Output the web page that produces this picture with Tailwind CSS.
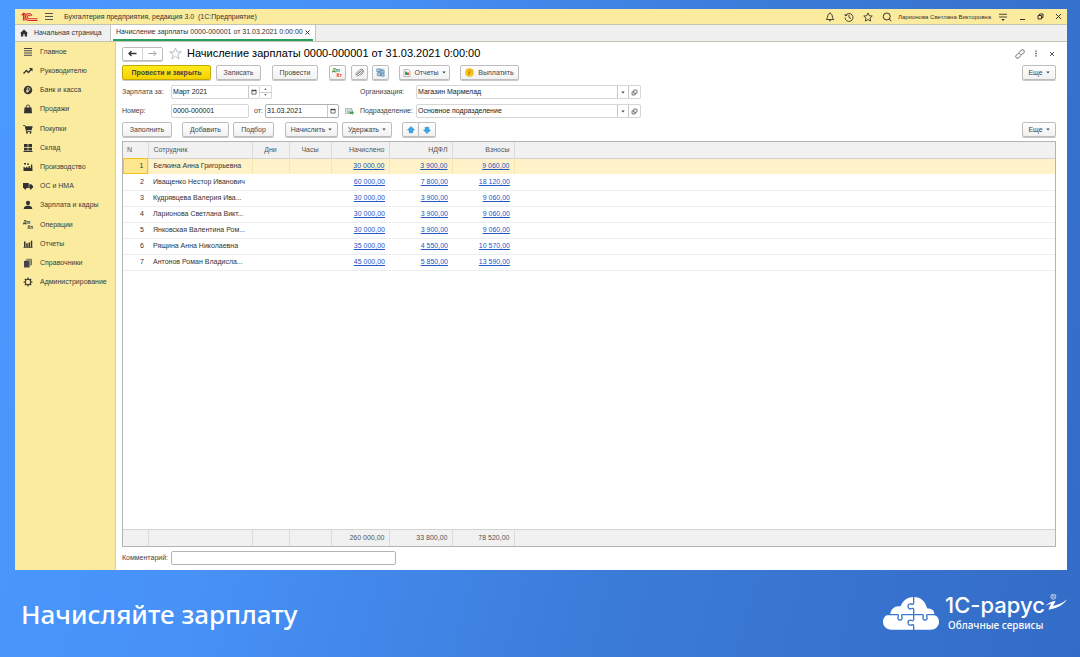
<!DOCTYPE html>
<html lang="ru">
<head>
<meta charset="utf-8">
<meta name="viewport" content="width=device-width, initial-scale=1">
<title>Начисление зарплаты</title>
<script src="https://cdn.jsdelivr.net/npm/@tailwindcss/browser@4"></script>
</head>
<body class="flex min-h-screen flex-col bg-linear-[105deg,#4b9aff_0%,#4791f7_28%,#3b7bd8_62%,#336cc6_100%] pt-[9px] font-['Liberation_Sans',Arial,sans-serif] text-[7px] leading-[10px] text-[#444]">
<svg class="hidden" aria-hidden="true">
  <symbol id="cal" viewBox="0 0 10 10"><path d="M1.5 2.5h7v6h-7z" fill="none" stroke="#444" stroke-width="1.2"/><path d="M1 1.6h8v2.2H1zM2.5.6h1v1h-1zM6.5.6h1v1h-1z" fill="#444"/></symbol>
  <symbol id="open" viewBox="0 0 10 10"><path d="M4 1.5h4.5V6H4zM6 6v2.5H1.5V4H4" fill="none" stroke="#555" stroke-width="1.1" stroke-linejoin="round"/></symbol>
  <symbol id="caret" viewBox="0 0 6 4"><path d="M.5.5h5L3 3.5z" fill="#444"/></symbol>
</svg>

<main class="mr-[13px] ml-[15px] flex flex-1 flex-col bg-white">
  <header class="flex h-[15px] items-center bg-[#fbeb9e] pr-1 pl-[6px]">
    <svg class="h-[10px] w-[17px]" viewBox="0 0 34 20" fill="none" stroke="#d8262c" stroke-width="2.2"><path d="M1 6.5 5 3v14M5 3.2h3V17"/><path d="M22 7.5C21 4.500 18.500 3 16 3c-4 0-6.500 3-6.500 7s3 7 6.500 7h17M18.800 8.500C18 7 17 6.500 16 6.500c-2 0-3 1.500-3 3.500s1.200 3.500 3 3.500h17"/></svg>
    <button aria-label="Меню" class="ml-[6px]"><svg class="h-[9px] w-[10px]" viewBox="0 0 10 9" stroke="#555"><path d="M1 1.500h8M1 4.500h8M1 7.500h8"/></svg></button>
    <h1 class="ml-[10px] flex-1 whitespace-nowrap text-[#333]">Бухгалтерия предприятия, редакция 3.0&nbsp; (1С:Предприятие)</h1>
    <div class="flex items-center gap-[9px]">
      <button aria-label="Уведомления"><svg class="size-[10px]" viewBox="0 0 20 20" fill="none" stroke="#333" stroke-width="1.800"><path d="M2.500 15h15c-2-2-2.500-4-3-7C14 4.500 12.500 3 10 3S6 4.500 5.500 8c-.5 3-1 5-3 7zM8 17.500h4M10 1v2"/></svg></button>
      <button aria-label="История"><svg class="size-[10px]" viewBox="0 0 20 20" fill="none" stroke="#333" stroke-width="1.800"><path d="M3 7a8 8 0 1 1-1 4M1.500 4 3 7.500 6.500 6.500M10 5.500V11l4 2"/></svg></button>
      <button aria-label="Избранное"><svg class="size-[10px]" viewBox="0 0 20 20" fill="none" stroke="#333" stroke-width="1.700"><path d="m10 1.800 2.500 5.600 6 .6-4.500 4.100 1.300 6L10 15l-5.300 3.100 1.300-6L1.500 8l6-.6z"/></svg></button>
      <button aria-label="Поиск"><svg class="size-[10px]" viewBox="0 0 20 20" fill="none" stroke="#333" stroke-width="2"><circle cx="9.500" cy="9" r="7"/><path d="m14.500 14 4 4.500"/></svg></button>
    </div>
    <span class="ml-[6px] whitespace-nowrap text-[6px] text-[#333]">Ларионова Светлана Викторовна</span>
    <button aria-label="Настройки" class="ml-[7px]"><svg class="size-[10px]" viewBox="0 0 20 20"><path d="M2 4.500h16M2 10h16" stroke="#333" stroke-width="1.800"/><path d="M6.500 14h7L10 18z" fill="#333"/></svg></button>
    <div class="ml-[10px] flex items-center gap-[9px]">
      <button aria-label="Свернуть"><svg class="size-[9px]" viewBox="0 0 9 9" stroke="#333"><path d="M2 7.500h5"/></svg></button>
      <button aria-label="Восстановить"><svg class="size-[9px]" viewBox="0 0 9 9" fill="none" stroke="#333"><path d="M2 3.500h3.500V7H2zM3.500 3.500V2H7v3.500H5.500"/></svg></button>
      <button aria-label="Закрыть окно"><svg class="size-[9px]" viewBox="0 0 9 9" stroke="#333"><path d="m2 2 5 5M7 2 2 7"/></svg></button>
    </div>
  </header>

  <nav aria-label="Вкладки" class="flex h-[18px] border-t border-b border-[#c4c4b4] bg-[#f0f0f0] text-[#333]">
    <a href="#" class="flex w-[96px] items-center border-r border-[#c4c4c4] pl-[5px] whitespace-nowrap">
      <svg class="size-[8px]" viewBox="0 0 16 16" fill="#333"><path d="M8 1 0 8.500h2V15h4.500v-4.500h3V15H14V8.500h2z"/></svg>
      <span class="ml-[6px]">Начальная страница</span>
    </a>
    <div class="flex w-[205px] flex-col border-r border-[#c4c4c4] bg-white px-[2px]">
      <div class="flex flex-1 items-center justify-between border-b-2 border-[#2ba05c] px-[3px] whitespace-nowrap">
        <a href="#">Начисление зарплаты 0000-000001 от 31.03.2021 0:00:00</a>
        <button aria-label="Закрыть вкладку"><svg class="size-[5px]" viewBox="0 0 5 5" stroke="#333"><path d="m.5.5 4 4M4.500.5l-4 4"/></svg></button>
      </div>
    </div>
  </nav>

  <div class="flex flex-1">
    <aside class="w-[101px] shrink-0 border-r border-[#e0d28c] bg-[#fbeb9e] text-[#3a3a3a]">
      <nav aria-label="Разделы" class="grid h-[250px] auto-rows-fr whitespace-nowrap [&_a]:flex [&_a]:items-center [&_a]:gap-[7px] [&_a]:pl-2 [&_svg]:size-[10px]">
        <a href="#"><svg viewBox="0 0 20 20" stroke="#444" stroke-width="2"><path d="M2 3h16M2 7.500h16M2 12h16M2 16.500h16"/></svg>Главное</a>
        <a href="#"><svg viewBox="0 0 20 20" fill="none" stroke="#333" stroke-width="2.600"><path d="m1 15 6-6 4 4 6-7"/><path d="M12 4h7v7z" fill="#333" stroke="none"/></svg>Руководителю</a>
        <a href="#"><svg viewBox="0 0 20 20"><circle cx="10" cy="10" r="8.500" fill="#333"/><path d="M8.500 15.500V5.500h2.700a2.600 2.600 0 0 1 0 5.300H6.500M6.500 13h5" fill="none" stroke="#fbeb9e" stroke-width="1.600"/></svg>Банк и касса</a>
        <a href="#"><svg viewBox="0 0 20 20"><path d="M3 7h14l1 11.500H2z" fill="#333"/><path d="M6.500 9V5.500a3.500 3.500 0 0 1 7 0V9" fill="none" stroke="#333" stroke-width="1.800"/></svg>Продажи</a>
        <a href="#"><svg viewBox="0 0 20 20" fill="#333"><path d="M0 2h4l1 2.500h14.500L17 12.500H7.500l.3 1.500H17v1.600H6.300L3.300 3.600H0z"/><circle cx="8" cy="17.500" r="1.800"/><circle cx="15" cy="17.500" r="1.800"/></svg>Покупки</a>
        <a href="#"><svg viewBox="0 0 20 20" fill="#333"><path d="M2 2h7.300v6H2zM10.700 2H18v6h-7.300zM2 9.300h7.300v5.500H2zM10.700 9.300H18v5.500h-7.300zM1 16h18v2H1z"/></svg>Склад</a>
        <a href="#"><svg viewBox="0 0 20 20" fill="#333"><path d="M1 9.500 6 12V9.500l5 2.500V8h2.500l.5 4h1.500L16 5h2.500l.5 13H1z"/><path d="M2 2h4v3H2zM8 3h4v2.500H8z"/></svg>Производство</a>
        <a href="#"><svg viewBox="0 0 20 20" fill="#333"><path d="M0 4h11.500v10H0zM12.500 6.500h4L20 10v4h-7.500z"/><circle cx="4.500" cy="15" r="2.200"/><circle cx="15.500" cy="15" r="2.200"/></svg>ОС и НМА</a>
        <a href="#"><svg viewBox="0 0 20 20" fill="#333"><path d="M10 1.500c2.700 0 4 1.800 4 4.200 0 2.600-1.400 4.900-4 4.900S6 8.300 6 5.700c0-2.400 1.300-4.200 4-4.200zM1.500 18c0-4 2-5.500 6-6.500h5c4 1 6 2.500 6 6.500z"/></svg>Зарплата и кадры</a>
        <a href="#"><svg viewBox="0 0 20 20" fill="#333" font-family="Liberation Sans" font-size="9" font-weight="bold" font-style="italic"><text x="0" y="8">Дт</text><text x="9" y="17">Кт</text></svg>Операции</a>
        <a href="#"><svg viewBox="0 0 20 20" fill="#333"><path d="M2 5h3v11H2zM6.500 8.500h3V16h-3zM11 7h3v9h-3zM15.500 3.500h3V16h-3zM1 16.500h18V18H1z"/></svg>Отчеты</a>
        <a href="#"><svg viewBox="0 0 20 20" fill="#444"><path d="M2 6h11v13H2z"/><path d="M4.500 4.500h10V16M7 2.500h10V14" fill="none" stroke="#444" stroke-width="1.400"/></svg>Справочники</a>
        <a href="#"><svg viewBox="0 0 20 20" fill="none" stroke="#333"><circle cx="10" cy="10" r="5.500" stroke-width="2.200"/><path d="M10 1v3M10 16v3M1 10h3M16 10h3M3.600 3.600l2.200 2.200M14.200 14.200l2.200 2.200M3.600 16.400l2.200-2.200M14.200 5.800l2.200-2.200" stroke-width="2.400"/></svg>Администрирование</a>
      </nav>
    </aside>

    <section class="flex min-w-0 flex-1 flex-col pt-[4px] pr-[11px] pb-[5px] pl-[6px]">
      <div class="flex h-[15px] items-center">
        <div class="flex h-[14px] w-[41px] rounded-[2px] border border-[#bbb] shadow-[0_1px_0_#ccc]">
          <button aria-label="Назад" class="flex flex-1 items-center justify-center border-r border-[#d4d4d4]"><svg class="h-[7px] w-[9px]" viewBox="0 0 18 14" fill="none" stroke="#333" stroke-width="2.600"><path d="M17 7H2M7 2 2 7l5 5"/></svg></button>
          <button aria-label="Вперёд" class="flex flex-1 items-center justify-center"><svg class="h-[7px] w-[9px]" viewBox="0 0 18 14" fill="none" stroke="#999" stroke-width="1.800"><path d="M1 7h15M11 2l5 5-5 5"/></svg></button>
        </div>
        <button aria-label="В избранное" class="ml-[6px]"><svg class="size-[13px]" viewBox="0 0 20 20" fill="none" stroke="#a5adb5" stroke-width="1.200"><path d="m10 1.500 2.400 6h6.600l-5.300 4 2 6.800L10 14.200l-5.700 4.100 2-6.800L1 7.500h6.600z"/></svg></button>
        <h2 class="ml-[5px] flex-1 whitespace-nowrap text-[11px] leading-[15px] text-black">Начисление зарплаты 0000-000001 от 31.03.2021 0:00:00</h2>
        <div class="flex items-center gap-[9px]">
          <button aria-label="Ссылка"><svg class="size-[10px]" viewBox="0 0 20 20" fill="none" stroke="#555" stroke-width="1.800"><path d="m9 6 3.500-3.500a3.200 3.200 0 0 1 5 5L14 11a3 3 0 0 1-4.500 0M11 14l-3.500 3.500a3.200 3.200 0 0 1-5-5L6 9a3 3 0 0 1 4.500 0"/></svg></button>
          <button aria-label="Действия" class="mr-[2px]"><svg class="h-[7px] w-[4px]" viewBox="0 0 8 16" fill="#444"><path d="M2.500 1h3v3h-3zM2.500 6.500h3v3h-3zM2.500 12h3v3h-3z"/></svg></button>
          <button aria-label="Закрыть" class="mr-[1px]"><svg class="size-[6px]" viewBox="0 0 6 6" stroke="#555"><path d="m1 1 4 4M5 1 1 5"/></svg></button>
        </div>
      </div>

      <div class="mt-[4px] flex h-[15px] whitespace-nowrap [&_button]:flex [&_button]:items-center [&_button]:justify-center [&_button]:rounded-[2px] [&_button]:border [&_button]:border-[#bdbdbd] [&_button]:bg-linear-to-b [&_button]:from-white [&_button]:to-[#f1f1f1] [&_button]:shadow-[0_1px_0_#c8c8c8]">
        <button class="w-[89px] border-[#c3a900]! from-[#ffea1a]! to-[#f5d200]! font-bold text-[#444]">Провести и закрыть</button>
        <button class="ml-[5px] w-[45px]">Записать</button>
        <button class="ml-[11px] w-[46px]">Провести</button>
        <button aria-label="Дт/Кт" class="ml-[11px] w-[17px]"><svg class="size-[11px]" viewBox="0 0 22 22" font-family="Liberation Sans" font-size="10" font-weight="bold"><text x="0" y="10" fill="#2c9a55" font-style="italic">Дт</text><text x="9" y="19" fill="#e03c31">Кт</text></svg></button>
        <button aria-label="Вложения" class="ml-[5px] w-[17px]"><svg class="size-[9px]" viewBox="0 0 20 20" fill="none" stroke="#666" stroke-width="1.700"><path d="M6 13.500 13.500 6a1.800 1.800 0 0 1 2.600 2.600L8 16.600a3.600 3.600 0 0 1-5-5L11 3.500a5 5 0 0 1 7 7L12 16.500M4.500 15l8-8"/></svg></button>
        <button aria-label="Структура" class="ml-[4px] w-[17px]"><svg class="size-[9px]" viewBox="0 0 20 20"><path d="M1 1h18v18H1z" fill="#c5dcec"/><path d="M2 2h7v6H2zM11 6h7v5h-7zM4 11h6v6H4zM12 13h6v5h-6zM9 4h5v2M7 8v3M10 15h2" fill="none" stroke="#336e9f" stroke-width="1.300"/></svg></button>
        <button class="ml-[10px] w-[51px] gap-[3px]"><svg class="size-[8px]" viewBox="0 0 16 16"><path d="M2 1h9l3 3v11H2z" fill="#fff" stroke="#777"/><path d="M4 5h4v7H4z" fill="#2fa65a"/><path d="M8 7h4v5H8z" fill="#df4238"/></svg>Отчеты<svg class="h-[3px] w-[4px]"><use href="#caret"/></svg></button>
        <button class="ml-[10px] w-[59px] gap-[4px]"><svg class="size-[9px]" viewBox="0 0 18 18"><circle cx="9" cy="9" r="8" fill="#fbc91f" stroke="#e0a400"/><path d="M7.500 14V5h2.300a2.200 2.200 0 0 1 0 4.500H6M6 11.500h4" fill="none" stroke="#b77c00" stroke-width="1.300"/></svg>Выплатить</button>
        <button class="ml-auto w-[34px] gap-[3px]">Еще<svg class="h-[3px] w-[4px]"><use href="#caret"/></svg></button>
      </div>

      <form class="mt-[5px] flex flex-col gap-[5px] whitespace-nowrap [&_input]:min-w-0 [&_input]:px-[1px] [&_input]:text-[#222] [&_input]:outline-none [&_select]:text-[#222]">
        <div class="flex h-[14px] items-center">
          <div class="flex w-[238px] items-center">
            <label for="period" class="w-[49px]">Зарплата за:</label>
            <div class="flex h-[14px] w-[89px] rounded-[2px] border border-[#d6d6d6]">
              <input id="period" value="Март 2021" class="flex-1">
              <button type="button" aria-label="Календарь периода" class="flex w-[11px] items-center justify-center border-l border-[#c8c8c8]"><svg class="size-[6px]"><use href="#cal"/></svg></button>
            </div>
            <div class="flex h-[14px] w-[12px] flex-col rounded-r-[2px] border-y border-r border-[#d6d6d6]">
              <button type="button" aria-label="Больше" class="flex flex-1 items-center justify-center border-b border-[#c8c8c8]"><svg class="h-[2px] w-[3px] rotate-180"><use href="#caret"/></svg></button>
              <button type="button" aria-label="Меньше" class="flex flex-1 items-center justify-center"><svg class="h-[2px] w-[3px]"><use href="#caret"/></svg></button>
            </div>
          </div>
          <label for="org" class="w-[56px]">Организация:</label>
          <div class="flex h-[14px] w-[225px] rounded-[2px] border border-[#d6d6d6]">
            <select id="org" class="flex-1 appearance-none px-[1px]"><option>Магазин Мармелад</option></select>
            <span class="pointer-events-none flex w-[11px] items-center justify-center border-l border-[#c8c8c8]"><svg class="h-[3px] w-[4px]"><use href="#caret"/></svg></span>
            <button type="button" aria-label="Открыть организацию" class="flex w-[12px] items-center justify-center border-l border-[#c8c8c8]"><svg class="size-[7px]" viewBox="0 0 10 10"><use href="#open"/></svg></button>
          </div>
        </div>
        <div class="flex h-[14px] items-center">
          <div class="flex w-[238px] items-center">
            <label for="num" class="w-[49px]">Номер:</label>
            <div class="flex h-[14px] w-[78px] rounded-[2px] border border-[#d6d6d6]"><input id="num" value="0000-000001" class="flex-1"></div>
            <label for="date" class="ml-[5px] w-[11px]">от:</label>
            <div class="flex h-[14px] w-[74px] rounded-[2px] border border-[#b0b0b0]">
              <input id="date" value="31.03.2021" class="flex-1">
              <button type="button" aria-label="Календарь даты" class="flex w-[11px] items-center justify-center border-l border-[#c8c8c8]"><svg class="size-[6px]"><use href="#cal"/></svg></button>
            </div>
            <svg class="ml-[6px] size-[9px]" viewBox="0 0 18 18"><path d="M1 3h13v10H1zM1 6h13M4 9h7M4 11h5" fill="#eef3ee" stroke="#8a9aa0" stroke-width="1.200"/><path d="M9 9.500h5V7l4 4.500-4 4.500v-2.500H9z" fill="#3fa64a"/></svg>
          </div>
          <label for="dept" class="w-[56px]">Подразделение:</label>
          <div class="flex h-[14px] w-[225px] rounded-[2px] border border-[#d6d6d6]">
            <select id="dept" class="flex-1 appearance-none px-[1px]"><option>Основное подразделение</option></select>
            <span class="pointer-events-none flex w-[11px] items-center justify-center border-l border-[#c8c8c8]"><svg class="h-[3px] w-[4px]"><use href="#caret"/></svg></span>
            <button type="button" aria-label="Открыть подразделение" class="flex w-[12px] items-center justify-center border-l border-[#c8c8c8]"><svg class="size-[7px]" viewBox="0 0 10 10"><use href="#open"/></svg></button>
          </div>
        </div>
      </form>

      <div class="mt-[4px] flex h-[15px] whitespace-nowrap [&_button]:flex [&_button]:items-center [&_button]:justify-center [&_button]:rounded-[2px] [&_button]:border [&_button]:border-[#bdbdbd] [&_button]:bg-linear-to-b [&_button]:from-white [&_button]:to-[#f1f1f1] [&_button]:shadow-[0_1px_0_#c8c8c8]">
        <button class="w-[50px]">Заполнить</button>
        <button class="ml-[10px] w-[47px]">Добавить</button>
        <button class="ml-[4px] w-[41px]">Подбор</button>
        <button class="ml-[11px] w-[53px] gap-[3px]">Начислить<svg class="h-[3px] w-[4px]"><use href="#caret"/></svg></button>
        <button class="ml-[4px] w-[50px] gap-[3px]">Удержать<svg class="h-[3px] w-[4px]"><use href="#caret"/></svg></button>
        <button aria-label="Вверх" class="ml-[10px] w-[17px] rounded-r-none!"><svg class="size-[8px]" viewBox="0 0 16 16"><path d="m8 1 7 7h-3.500v5.500h-7V8H1z" fill="#38a7e6" stroke="#1c7db8"/></svg></button>
        <button aria-label="Вниз" class="w-[17px] rounded-l-none! border-l-0!"><svg class="size-[8px]" viewBox="0 0 16 16"><path d="m8 15 7-7h-3.500V2.500h-7V8H1z" fill="#38a7e6" stroke="#1c7db8"/></svg></button>
        <button class="ml-auto w-[34px] gap-[3px]">Еще<svg class="h-[3px] w-[4px]"><use href="#caret"/></svg></button>
      </div>

      <div class="mt-[4px] grid flex-1 border border-[#b4b4b4]">
        <table class="h-full w-full table-fixed border-collapse whitespace-nowrap [&_td]:p-0 [&_td]:px-[4px] [&_th]:p-0 [&_th]:px-[4px] [&_th]:font-normal [&_tr>*:nth-child(2)]:pl-[5px] [&_tr>*:nth-child(n+3):nth-child(-n+7)]:text-right [&_a]:text-[#2257c4] [&_a]:underline">
          <colgroup><col class="w-[25px]"><col class="w-[104px]"><col class="w-[37px]"><col class="w-[42px]"><col class="w-[58px]"><col class="w-[63px]"><col class="w-[62px]"><col></colgroup>
          <thead>
            <tr class="h-[16px] border-b border-[#d2d2d2] bg-[#f1f1f1] text-left text-[#555] [&>th]:border-r [&>th]:border-[#dcdcdc] [&>th:last-child]:border-r-0">
              <th>N</th><th>Сотрудник</th><th class="text-center!">Дни</th><th class="text-center!">Часы</th><th>Начислено</th><th>НДФЛ</th><th>Взносы</th><th></th>
            </tr>
          </thead>
          <tbody class="text-[#333] [&>tr>td:first-child]:text-right [&>tr>td:nth-child(2)]:overflow-hidden">
            <tr class="h-[16px] bg-[#fff2c8] [&>td]:border-r [&>td]:border-[#f7e6b0] [&>td:last-child]:border-r-0"><td class="bg-[#ffe68f] outline outline-[#f0c419] -outline-offset-1">1</td><td>Белкина Анна Григорьевна</td><td></td><td></td><td><a href="#">30 000,00</a></td><td><a href="#">3 900,00</a></td><td><a href="#">9 060,00</a></td><td></td></tr>
            <tr class="h-[16px] border-b border-[#ededed]"><td>2</td><td>Иващенко Нестор Иванович</td><td></td><td></td><td><a href="#">60 000,00</a></td><td><a href="#">7 800,00</a></td><td><a href="#">18 120,00</a></td><td></td></tr>
            <tr class="h-[16px] border-b border-[#ededed]"><td>3</td><td>Кудрявцева Валерия Ива...</td><td></td><td></td><td><a href="#">30 000,00</a></td><td><a href="#">3 900,00</a></td><td><a href="#">9 060,00</a></td><td></td></tr>
            <tr class="h-[16px] border-b border-[#ededed]"><td>4</td><td>Ларионова Светлана Викт...</td><td></td><td></td><td><a href="#">30 000,00</a></td><td><a href="#">3 900,00</a></td><td><a href="#">9 060,00</a></td><td></td></tr>
            <tr class="h-[16px] border-b border-[#ededed]"><td>5</td><td>Янковская Валентина Ром...</td><td></td><td></td><td><a href="#">30 000,00</a></td><td><a href="#">3 900,00</a></td><td><a href="#">9 060,00</a></td><td></td></tr>
            <tr class="h-[16px] border-b border-[#ededed]"><td>6</td><td>Рящина Анна Николаевна</td><td></td><td></td><td><a href="#">35 000,00</a></td><td><a href="#">4 550,00</a></td><td><a href="#">10 570,00</a></td><td></td></tr>
            <tr class="h-[16px] border-b border-[#ededed]"><td>7</td><td>Антонов Роман Владисла...</td><td></td><td></td><td><a href="#">45 000,00</a></td><td><a href="#">5 850,00</a></td><td><a href="#">13 590,00</a></td><td></td></tr>
            <tr><td colspan="8"></td></tr>
          </tbody>
          <tfoot>
            <tr class="h-[17px] border-t border-[#d2d2d2] bg-[#f1f1f1] text-[#555] [&>td]:border-r [&>td]:border-[#dcdcdc] [&>td:last-child]:border-r-0"><td></td><td></td><td></td><td></td><td>260 000,00</td><td>33 800,00</td><td>78 520,00</td><td></td></tr>
          </tfoot>
        </table>
      </div>

      <div class="mt-[4px] flex items-center">
        <label for="comment" class="w-[49px]">Комментарий:</label>
        <input id="comment" class="h-[14px] w-[225px] rounded-[2px] border border-[#b4b4b4] px-[3px] outline-none">
      </div>
    </section>
  </div>
</main>

<footer class="flex h-[87px] items-center justify-between pr-[13px] pl-[21px] text-white">
  <p class="text-[26px] leading-[36px] font-medium font-['Noto_Sans',sans-serif]">Начисляйте зарплату</p>
  <a href="#" class="flex items-center gap-[6px]" aria-label="1С-Рарус Облачные сервисы">
    <svg class="h-[33px] w-[56px]" viewBox="0 0 168 99"><path d="M25 98C10 98 0 87 0 75c0-13 9-23 22-24 1-16 15-26 31-23C60 9 75 0 92 0c22 0 36 14 40 34 17 1 23 9 22 20 9 3 14 11 14 20 0 14-11 24-25 24z" fill="#fff"/><path d="M0 53h43c5 0 3 4 2 7-2 6 2 9 6 9s8-3 6-9c-1-3-3-7 2-7h59c5 0 3 4 2 7-2 6 2 9 6 9s8-3 6-9c-1-3-3-7 2-7h34M92 0v18c0 5-4 4-7 3-6-2-10 2-10 7s4 9 10 7c3-1 7-2 7 3v29c0 5-4 4-7 3-6-2-10 2-10 7s4 9 10 7c3-1 7-2 7 3v12" fill="none" stroke="#3a77d2" stroke-width="4"/></svg>
    <span class="relative flex w-[122px] flex-col whitespace-nowrap">
      <span class="font-['Inter',sans-serif] text-[22px] leading-[20px] font-medium">1С-рарус</span>
      <span class="mt-[3px] pl-[3px] font-['Noto_Sans',sans-serif] text-[10px] leading-[14px] font-medium">Облачные сервисы</span>
      <svg class="absolute -top-[1px] right-0 h-[18px] w-[24px]" viewBox="0 0 72 54"><path d="M4 40C14 28 24 22 38 20l-8 16c14-3 28-7 42-20C62 32 44 44 16 47l8-18C16 31 9 34 4 40z" fill="#fff"/><circle cx="31" cy="8" r="7.500" fill="none" stroke="#fff" stroke-width="2"/><text x="27" y="12" font-size="11" font-family="Liberation Sans" fill="#fff">R</text></svg>
    </span>
  </a>
</footer>
</body>
</html>
